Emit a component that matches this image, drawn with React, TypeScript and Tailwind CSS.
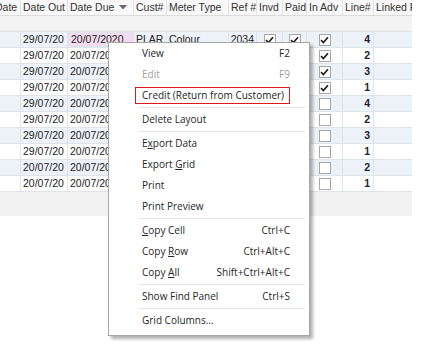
import React from 'react';

type Row = {
  out: string;
  due: string;
  cust: string;
  type: string;
  ref: string;
  invd: boolean;
  paid: boolean;
  adv: boolean;
  line: number;
};

const rows: Row[] = [
  { out: '29/07/20', due: '20/07/2020', cust: 'PLAR', type: 'Colour', ref: '2034', invd: true, paid: true, adv: true, line: 4 },
  { out: '29/07/20', due: '20/07/2020', cust: 'PLAR', type: 'Colour', ref: '2034', invd: true, paid: true, adv: true, line: 2 },
  { out: '29/07/20', due: '20/07/2020', cust: 'PLAR', type: 'Mono', ref: '2034', invd: true, paid: true, adv: true, line: 3 },
  { out: '29/07/20', due: '20/07/2020', cust: 'PLAR', type: 'Mono', ref: '2034', invd: true, paid: true, adv: true, line: 1 },
  { out: '29/07/20', due: '20/07/2020', cust: 'PLAR', type: 'Colour', ref: '2035', invd: false, paid: false, adv: false, line: 4 },
  { out: '29/07/20', due: '20/07/2020', cust: 'PLAR', type: 'Colour', ref: '2035', invd: false, paid: false, adv: false, line: 2 },
  { out: '29/07/20', due: '20/07/2020', cust: 'PLAR', type: 'Mono', ref: '2035', invd: false, paid: false, adv: false, line: 3 },
  { out: '29/07/20', due: '20/07/2020', cust: 'PLAR', type: 'Mono', ref: '2035', invd: false, paid: false, adv: false, line: 1 },
  { out: '20/07/20', due: '20/07/2020', cust: 'PLAR', type: 'Colour', ref: '2036', invd: false, paid: false, adv: false, line: 2 },
  { out: '20/07/20', due: '20/07/2020', cust: 'PLAR', type: 'Colour', ref: '2036', invd: false, paid: false, adv: false, line: 1 },
];

const Check = ({ on }: { on: boolean }) => (
  <span className="w-[12px] h-[12px] border border-[#a8a8a8] bg-white flex items-center justify-center">
    {on && (
      <svg width="9" height="8" viewBox="0 0 9 8">
        <path d="M1 4.2 L3.4 6.5 L8 1.3" stroke="#1f1f1f" strokeWidth="1.7" fill="none" />
      </svg>
    )}
  </span>
);

const cell = 'h-full flex items-center overflow-hidden whitespace-nowrap border-r border-[#dfe4ea] shrink-0';

type Item = { label: React.ReactNode; key?: string; disabled?: boolean; sep?: boolean; boxed?: boolean };

const menu: Item[] = [
  { label: 'View', key: 'F2' },
  { label: 'Edit', key: 'F9', disabled: true },
  { label: 'Credit (Return from Customer)', boxed: true, sep: true },
  { label: 'Delete Layout', sep: true },
  { label: <>E<u>x</u>port Data</> },
  { label: <>Export <u>G</u>rid</> },
  { label: 'Print' },
  { label: 'Print Preview', sep: true },
  { label: <><u>C</u>opy Cell</>, key: 'Ctrl+C' },
  { label: <>Copy <u>R</u>ow</>, key: 'Ctrl+Alt+C' },
  { label: <>Copy <u>A</u>ll</>, key: 'Shift+Ctrl+Alt+C', sep: true },
  { label: 'Show Find Panel', key: 'Ctrl+S', sep: true },
  { label: 'Grid Columns...' },
];

export default function App() {
  return (
    <div className="relative w-[432px] h-[356px] bg-white overflow-hidden font-['Liberation_Sans',Arial,sans-serif] text-[10.5px] text-[#222]">
      <div className="w-[412px]">
        {/* header */}
        <div className="flex h-[16px] bg-[#f8f8f8] border-b border-[#dcdcdc] text-[#333]">
          <div className={`${cell} w-[21px]`}><span className="ml-[-5px]">Date</span></div>
          <div className={`${cell} w-[47px] pl-[2px]`}>Date Out</div>
          <div className={`${cell} w-[66px] pl-[2px] justify-between pr-[6px]`}>
            <span>Date Due</span>
            <svg width="8" height="5" viewBox="0 0 8 5"><path d="M0 0 H8 L4 4.5 Z" fill="#666" /></svg>
          </div>
          <div className={`${cell} w-[33px] pl-[2px]`}>Cust#</div>
          <div className={`${cell} w-[62px] pl-[2px]`}>Meter Type</div>
          <div className={`${cell} w-[28px] pl-[2px]`}>Ref #</div>
          <div className={`${cell} w-[26px] pl-[2px]`}>Invd</div>
          <div className={`${cell} w-[24px] pl-[2px]`}>Paid</div>
          <div className={`${cell} w-[36px] pl-[2px]`}>In Adv</div>
          <div className={`${cell} w-[31px] pl-[2px]`}>Line#</div>
          <div className={`${cell} w-[38px] pl-[2px] border-r-0`}>Linked P</div>
        </div>
        {/* filter row */}
        <div className="h-[16px] bg-[#f3f3f3] border-b border-[#e2e2e2]" />
        {rows.map((r, i) => (
          <div key={i} className={`flex h-[16px] border-b border-[#dfe4ea] ${i % 2 === 0 ? 'bg-[#edf2f9]' : 'bg-white'}`}>
            <div className={`${cell} w-[21px]`} />
            <div className={`${cell} w-[47px] pl-[2px]`}>{r.out}</div>
            <div className={`${cell} w-[66px] pl-[2px] ${i === 0 ? 'bg-[#f3dcef] border border-[#4a4a4a]' : ''}`}>{r.due}</div>
            <div className={`${cell} w-[33px] pl-[2px]`}>{r.cust}</div>
            <div className={`${cell} w-[62px] pl-[2px]`}>{r.type}</div>
            <div className={`${cell} w-[28px] justify-end pr-[2px]`}>{r.ref}</div>
            <div className={`${cell} w-[26px] justify-center`}><Check on={r.invd} /></div>
            <div className={`${cell} w-[24px] justify-center`}><Check on={r.paid} /></div>
            <div className={`${cell} w-[36px] justify-center`}><Check on={r.adv} /></div>
            <div className={`${cell} w-[31px] justify-end pr-[3px] font-bold text-[#1c2433]`}>{r.line}</div>
            <div className={`${cell} w-[38px] border-r-0`} />
          </div>
        ))}
        {/* footer */}
        <div className="h-[24px] bg-[#f2f2f2]" />
      </div>

      {/* context menu */}
      <div className="absolute left-[108px] top-[42px] w-[202px] bg-white border border-[#a6a6a6] shadow-[3px_3px_3px_rgba(0,0,0,0.3)] pb-[4px] font-['Open_Sans',sans-serif] text-[10px] text-[#262626]">
        {menu.map((m, i) => (
          <React.Fragment key={i}>
            <div className={`relative h-[21px] flex items-center justify-between pl-[33px] pr-[19px] ${m.disabled ? 'text-[#a0a0a0]' : ''}`}>
              <span>{m.label}</span>
              {m.key && <span>{m.key}</span>}
              {m.boxed && <div className="absolute left-[26px] top-[2px] w-[155px] h-[17px] border border-[#e0161b]" />}
            </div>
            {m.sep && (
              <div className="h-[3px] flex items-center pl-[29px] pr-[4px]">
                <div className="h-px w-full bg-[#e6e6e6]" />
              </div>
            )}
          </React.Fragment>
        ))}
      </div>
    </div>
  );
}
